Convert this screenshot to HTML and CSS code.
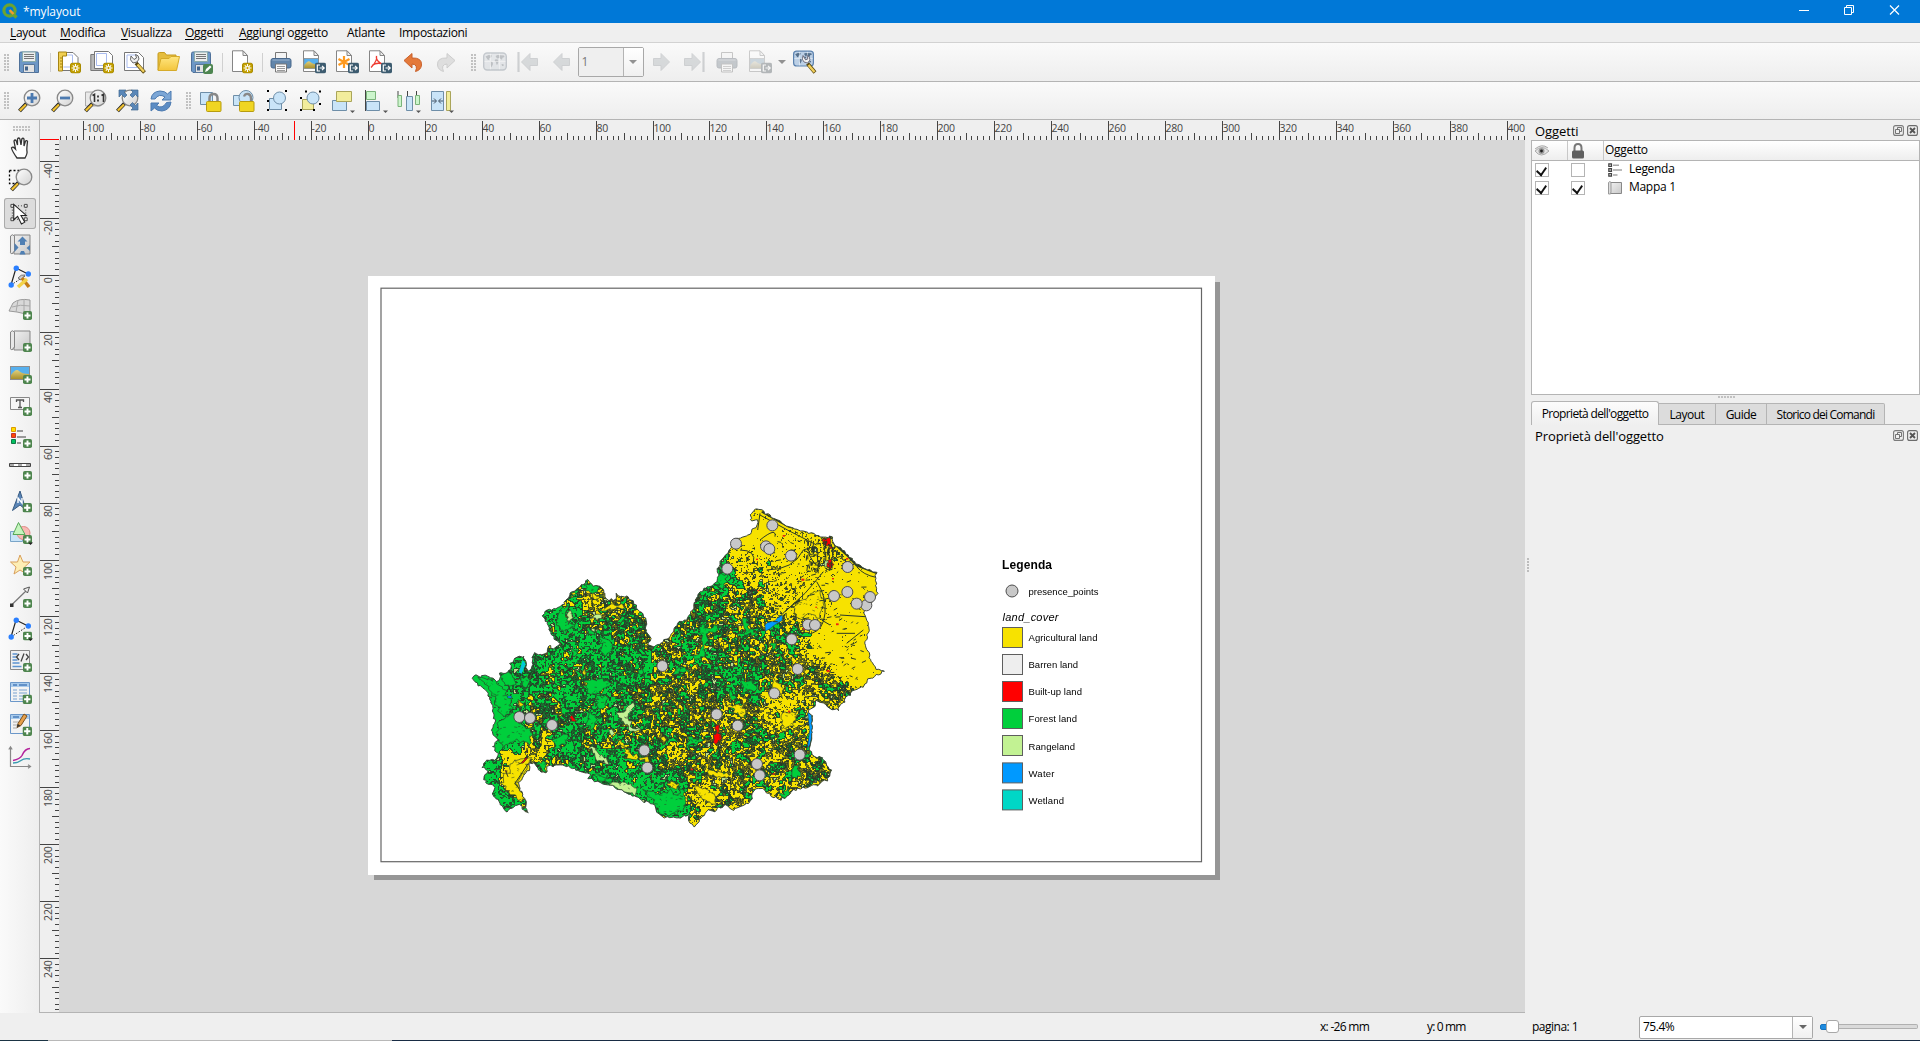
FILE: index.html
```html
<!DOCTYPE html>
<html lang="it">
<head>
<meta charset="utf-8">
<title>*mylayout</title>
<link rel="stylesheet" href="styles.css">
</head>
<body>
<svg class="sprite" aria-hidden="true">
  <defs>
    <linearGradient id="grey" x1="0" y1="0" x2="1" y2="1"><stop offset="0" stop-color="#f0f0f0"/><stop offset="1" stop-color="#c8c8c8"/></linearGradient>
    <linearGradient id="hill" x1="0" y1="0" x2="0" y2="1"><stop offset="0" stop-color="#e0cf7c"/><stop offset="1" stop-color="#a9902c"/></linearGradient>
    <linearGradient id="folder" x1="0" y1="0" x2="0" y2="1"><stop offset="0" stop-color="#ffe680"/><stop offset="1" stop-color="#f3c53c"/></linearGradient>
    <linearGradient id="glass" x1="0" y1="0" x2="1" y2="1"><stop offset="0" stop-color="#fff"/><stop offset="1" stop-color="#d2d2d2"/></linearGradient>
  </defs>
  <symbol id="b-new" viewBox="0 0 11 11"><rect x=".5" y=".5" width="10" height="10" rx="2" fill="#c4a000" stroke="#a88a00"/><path d="M5.5 1.5v8M1.5 5.5h8M2.8 2.8l5.4 5.4M8.2 2.8L2.8 8.2" stroke="#fff" stroke-width="1.1"/><circle cx="5.5" cy="5.5" r="1.6" fill="#c4a000" stroke="#fff" stroke-width=".9"/></symbol>
  <symbol id="b-add" viewBox="0 0 9 9"><rect width="9" height="9" rx="1.8" fill="#4e854e"/><path d="M4.5 1.5v6M1.5 4.5h6" stroke="#fff" stroke-width="1.9"/></symbol>
  <symbol id="b-exp" viewBox="0 0 11 11"><rect width="11" height="11" rx="2" fill="#3d5c70"/><path d="M5 2.5H2.3v6H5M4.5 5.5H9M7 3.3l2.2 2.2L7 7.700" fill="none" stroke="#fff" stroke-width="1.2"/></symbol>
  <symbol id="page" viewBox="0 0 24 24"><path d="M4.500.8h10.500l4.500 4.700v16h-15z" fill="#fff" stroke="#858585"/><path d="M15 .8v4.700h4.500z" fill="#ededed" stroke="#858585"/></symbol>
  <symbol id="disk" viewBox="0 0 24 24"><path d="M2.500 3.500q0-1.500 1.500-1.500h16q1.500 0 1.500 1.500v19h-17.500l-1.500-1.500z" fill="#6d97c6" stroke="#4f719a"/><rect x="5.500" y="2" width="13" height="9.500" fill="#eee" stroke="#8aa"/><path d="M7 4.500h10M7 6.500h10M7 8.500h10" stroke="#777"/><path d="M6.500 14.500h11v8h-11z" fill="#e3e3e3" stroke="#58779b"/><path d="M8 16.500h3v4H8z" fill="#44658d"/></symbol>
  <symbol id="lens" viewBox="0 0 24 24"><path d="M10 14L2.500 22" stroke="#222" stroke-width="4"/><path d="M9 15.500L2.800 21.600" stroke="#f1c232" stroke-width="2.200"/><circle cx="15" cy="9" r="7.800" fill="url(#glass)" stroke="#888" stroke-width="1.300"/></symbol>
  <symbol id="printer" viewBox="0 0 24 24"><path d="M6.500 2.500h11v7h-11z" fill="#f4f4f4" stroke="#777"/><rect x="2" y="8.500" width="20" height="9.500" rx="2" fill="#6286ab" stroke="#48688c"/><path d="M3.500 10h17" stroke="#9ab3cf"/><path d="M6.500 14h11v8h-11z" fill="#fafafa" stroke="#777"/><path d="M8 16.500h8M8 18.500h8M8 20.500h8" stroke="#999"/></symbol>
  <symbol id="pic" viewBox="0 0 20 14"><rect x=".5" y=".5" width="19" height="13" fill="#57b0ee" stroke="#8d8d8d"/><path d="M1 9q5-7 8-4t10 3v5H1z" fill="url(#hill)"/></symbol>
  <symbol id="nodes" viewBox="0 0 24 24"><path d="M3 20L8 3l12 6" stroke="#222" stroke-width="1.200" fill="none"/><path d="M3 20L20 9" stroke="#222" stroke-dasharray="1.500 1.500"/><g fill="#2a7fff"><circle cx="3.200" cy="20" r="2.700"/><circle cx="8.300" cy="3.200" r="2.700"/><circle cx="20.300" cy="9" r="2.700"/></g></symbol>
  <symbol id="atlas" viewBox="0 0 24 24"><rect x=".7" y="3" width="22.600" height="17" rx="3.500" fill="#bcd0e6" stroke="#5d83af" stroke-width="1.400"/><path d="M2.500 6.500l3-1.500 3.500.5-1 2-2 1 .5 1-1.500.5zM7.500 11l2 1 .5 2-1.500 3.500-1-3zM12.500 6l2-1 6.500.5.5 1.500-2 .8-.5 2-1.200-.8-1.300-1-2.500.5zM12 9.500l2.500-.3 1 2.300-1 3-1 .2-.5-2.500-1.300-1zM18.500 14l2 .2.300 1.500-1.800.3z" fill="#56708c"/><path d="M1.500 11.500h21M7.500 3.800v15.500M16.500 3.800v15.500" stroke="#fff" stroke-width=".8" opacity=".7"/></symbol>
  <symbol id="arrowl" viewBox="0 0 24 24"><path d="M3.500 12L12 3.500v5h7.500v7H12v5z" fill="#9db0bf" stroke="#8798a7"/></symbol>
  <symbol id="scroll" viewBox="0 0 24 24"><path d="M6 2h16v19H6z" fill="url(#grey)" stroke="#858585"/><path d="M2.500 3q1.700-2.500 4 0v15.500H6q-1 0-1 1.800-2.500 1-2.500-.5z" fill="#e8e8e8" stroke="#858585"/></symbol>
  <symbol id="float" viewBox="0 0 11 11"><rect x=".6" y=".6" width="9.800" height="9.800" rx="2" fill="none" stroke="#7b7b7b" stroke-width="1.100"/><path d="M4.500 4.500v-2h4v4h-2M2.500 4.500h4v4h-4z" fill="none" stroke="#666" stroke-width=".9"/></symbol>
  <symbol id="close" viewBox="0 0 11 11"><rect x=".6" y=".6" width="9.800" height="9.800" rx="2" fill="none" stroke="#6b6b6b" stroke-width="1.100"/><path d="M3 3l5 5M8 3L3 8" stroke="#555" stroke-width="1.900"/></symbol>
</svg>

<header class="titlebar">
  <svg class="logo" viewBox="0 0 16 16"><circle cx="7.500" cy="7.500" r="5.600" fill="none" stroke="#6aa332" stroke-width="3.200"/><path d="M8 8l6.500 6.500" stroke="#6aa332" stroke-width="3.400"/><path d="M7.500 7l4 4" stroke="#f29a2e" stroke-width="2.400"/></svg>
  <span class="title">*mylayout</span>
  <svg class="winbtns" viewBox="0 0 102 12"><g fill="none" stroke="#fff"><path d="M0 6.500h10"/><path d="M45.500 3.500h7v7h-7zM47.500 3.500v-2h7v7h-2"/><path d="M91 1.500l9 9M100 1.500l-9 9" stroke-width="1.200"/></g></svg>
</header>

<nav class="menubar">
  <span class="m1"><u>L</u>ayout</span><span class="m2"><u>M</u>odifica</span><span class="m3"><u>V</u>isualizza</span><span class="m4"><u>O</u>ggetti</span><span class="m5"><u>A</u>ggiungi oggetto</span><span class="m6">Atlante</span><span>Impostazioni</span>
</nav>

<div class="toolbar first">
  <i class="grip lead"></i>
  <svg class="ico"><use href="#disk"/></svg>
  <i class="sep"></i>
  <svg class="ico" viewBox="0 0 24 24"><path d="M4 2.500h12l5 5v13H4z" fill="#fff" stroke="#777"/><path d="M6.500 5h9v12h-9" fill="none" stroke="#a9bbee"/><path d="M1.500 2h8v4h-4v15h-4z" fill="#f0cf52" stroke="#a58413"/><path d="M3 8h2M3 11h2M3 14h2M3 17h2" stroke="#a58413"/><use href="#b-new" x="13" y="12.500" width="11" height="11"/></svg>
  <svg class="ico" viewBox="0 0 24 24"><path d="M.8 4.500h17v16h-17z" fill="#b9b9b9" stroke="#777"/><path d="M4.500 1.500h14l4 4v13h-18z" fill="#fff" stroke="#777"/><path d="M6.500 3.500h10v12h-10z" fill="none" stroke="#a9bbee"/><use href="#b-new" x="13" y="12.500" width="11" height="11"/></svg>
  <svg class="ico" viewBox="0 0 24 24"><path d="M1.500 2.500h14l5 5v13h-19z" fill="#fff" stroke="#777"/><path d="M4 5h10v12.500H4z" fill="none" stroke="#a9bbee"/><path d="M13 13l8.500 9.500" stroke="#5c4a12" stroke-width="3.800"/><path d="M14.500 14.500l6.500 7.300" stroke="#f1cf5a" stroke-width="2.400"/><path d="M8 6q-2 4 2 7l4-1 2-3q0-4-3.500-4.500l1 3.500-2.500 1.500z" fill="#eee" stroke="#666"/></svg>
  <svg class="ico" viewBox="0 0 24 24"><path d="M2 20V4q0-1.500 1.500-1.500h5L10.500 5H20v4" fill="#e5bd3e" stroke="#c79c1e"/><path d="M2 20.500L5 8.500h8l2-2h8.500l-3 14z" fill="url(#folder)" stroke="#d6ab2a"/></svg>
  <svg class="ico" viewBox="0 0 24 24"><use href="#disk" width="24" height="24"/><rect x="14" y="14" width="10" height="10" rx="2" fill="#4d8550"/><path d="M16 22l1-3 4-3.500 1.500 1.500-4 4z" fill="#fff"/></svg>
  <i class="sep"></i>
  <svg class="ico" viewBox="0 0 24 24"><use href="#page" width="24" height="24" x="-1"/><use href="#b-new" x="13" y="12.500" width="11" height="11"/></svg>
  <i class="sep"></i>
  <svg class="ico"><use href="#printer"/></svg>
  <svg class="ico" viewBox="0 0 24 24"><use href="#page" width="24" height="24" x="-3"/><use href="#pic" x="1.500" y="8" width="15.500" height="11"/><use href="#b-exp" x="13" y="12.500" width="11" height="11"/></svg>
  <svg class="ico" viewBox="0 0 24 24"><use href="#page" width="24" height="24" x="-3"/><path d="M9 6v12M3.500 9l11 6M14.500 9l-11 6" stroke="#ff9a1f" stroke-width="2.200"/><use href="#b-exp" x="13" y="12.500" width="11" height="11"/></svg>
  <svg class="ico" viewBox="0 0 24 24"><use href="#page" width="24" height="24" x="-3"/><path d="M8.500 6q1 5-5.500 11.500M8.500 6q-1.500 5 7 8.500M4 15.500q4-3 9-2" fill="none" stroke="#ee3a30" stroke-width="1.300"/><use href="#b-exp" x="13" y="12.500" width="11" height="11"/></svg>
  <svg class="ico" viewBox="0 0 24 24"><path d="M3 10.500L11 3.500v4.500q10-.5 9.500 7-.5 5-6 6.500 3-7-3.500-7.500v4z" fill="#e4793a" stroke="#c9602a"/></svg>
  <svg class="ico" viewBox="0 0 24 24"><path d="M21 10.500L13 3.500v4.500q-10-.5-9.500 7 .5 5 6 6.500-3-7 3.500-7.500v4z" fill="#dedede" stroke="#cdcdcd"/></svg>
  <i class="grip"></i>
  <svg class="ico dim" viewBox="0 0 24 24"><use href="#atlas" width="24" height="24"/></svg>
  <svg class="ico dim" viewBox="0 0 24 24"><path d="M2.500 2v20" stroke="#8798a7" stroke-width="2.200"/><use href="#arrowl" x="2" width="24" height="24"/></svg>
  <svg class="ico dim" viewBox="0 0 24 24"><use href="#arrowl" x="1" width="24" height="24"/></svg>
  <div class="combo page-combo"><span class="val">1</span><span class="drop"><i class="tri"></i></span></div>
  <svg class="ico dim flip" viewBox="0 0 24 24"><use href="#arrowl" width="24" height="24"/></svg>
  <svg class="ico dim flip" viewBox="0 0 24 24"><path d="M2.500 2v20" stroke="#8798a7" stroke-width="2.200"/><use href="#arrowl" x="2" width="24" height="24"/></svg>
  <svg class="ico dim"><use href="#printer"/></svg>
  <svg class="ico dim" viewBox="0 0 24 24"><use href="#page" width="24" height="24" x="-3"/><use href="#pic" x="1.500" y="8" width="15.500" height="11"/><use href="#b-exp" x="13" y="12.500" width="11" height="11"/></svg>
  <i class="tri gap"></i>
  <svg class="ico" viewBox="0 0 24 24"><use href="#atlas" x="0" y="-1.500" width="21" height="21"/><path d="M14.500 13.500l7.500 9" stroke="#5c4a12" stroke-width="3.700"/><path d="M15.500 15l6 7" stroke="#f1cf5a" stroke-width="2.400"/><path d="M10 5.500q-2 4 1 6.500l3.500 1 2.500-3q0-3.500-3-4.500l.8 3.500-2.300.8z" fill="#f2f2f2" stroke="#667" stroke-width=".9"/></svg>
</div>

<div class="toolbar second">
  <i class="grip lead"></i>
  <svg class="ico" viewBox="0 0 24 24"><use href="#lens" width="24" height="24"/><path d="M15 4v10M10 9h10" stroke="#4c7ab0" stroke-width="2.800"/></svg>
  <svg class="ico" viewBox="0 0 24 24"><use href="#lens" width="24" height="24"/><path d="M10 9h10" stroke="#4c7ab0" stroke-width="2.800"/></svg>
  <svg class="ico" viewBox="0 0 24 24"><path d="M2.500 3h15v14h-15z" fill="#e9e9e9" stroke="#aaa"/><use href="#lens" width="24" height="24"/><path d="M9.500 6.500l2-1.200V13M18.500 6.500l2-1.200V13" fill="none" stroke="#333" stroke-width="1.600"/><path d="M15 6.500v2M15 10.500v2" stroke="#333" stroke-width="1.800"/></svg>
  <svg class="ico" viewBox="0 0 24 24"><use href="#lens" x="-1" width="24" height="24"/><g fill="#5a87b8" stroke="#3f678f" stroke-width=".7"><path d="M3 1h7L8 3l3 3-2.500 2.500-3-3L3 8zM22 1h-7l2 2-3 3 2.500 2.500 3-3L22 8zM22 21h-7l2-2-3-3 2.500-2.500 3 3L22 14z"/></g></svg>
  <svg class="ico" viewBox="0 0 24 24"><path d="M2 10Q3 2.500 11 2q5 0 7.500 3L22 2v9h-9l3-3q-6-4-10 2z" fill="#7ba6d6" stroke="#4c7ab0"/><path d="M22 13q-1 8-9 9-5 0-7.500-3L2 22v-8h8l-2.500 2.500q6 4 10-3z" fill="#5b8cc4" stroke="#4c7ab0"/></svg>
  <i class="grip wide"></i>
  <svg class="ico" viewBox="0 0 24 24"><path d="M1.500 3.500h12v12h-12z" fill="#c9e4f8" stroke="#6e8ea8"/><path d="M10.500 13V9.500q0-4.500 4-4.500t4 4.500V13" fill="none" stroke="#888" stroke-width="2.500"/><rect x="7.500" y="12.500" width="14.500" height="10" rx="1" fill="#f0d523" stroke="#b79c0f"/></svg>
  <svg class="ico" viewBox="0 0 24 24"><path d="M1.500 6.500h9v10h-9z" fill="#c9e4f8" stroke="#6e8ea8"/><circle cx="14" cy="8.500" r="7" fill="#c9e4f8" stroke="#6e8ea8"/><path d="M12 7.500q1-3 4-2.500 3 .5 3 4.500V13" fill="none" stroke="#888" stroke-width="2.300"/><rect x="7.500" y="12.500" width="14.500" height="10" rx="1" fill="#f0d523" stroke="#b79c0f"/></svg>
  <svg class="ico" viewBox="0 0 24 24"><path d="M4.500 9.500h12v11h-12z" fill="#c9e4f8" stroke="#6e8ea8"/><circle cx="14.500" cy="9" r="6" fill="#c9e4f8" stroke="#6e8ea8"/><path d="M2 2h2m16 0h2M2 21h2m16 0h2M2 12h2" stroke="#000" stroke-width="2"/></svg>
  <svg class="ico" viewBox="0 0 24 24"><path d="M4.500 10.500h11v10h-11z" fill="#f2ed9c" stroke="#aaa55a"/><circle cx="15" cy="9" r="6" fill="#c9e4f8" stroke="#6e8ea8"/><path d="M7 2.500h2m12 0h2M2 9h2M2 21h2m11 0h2M21 15h2" stroke="#000" stroke-width="2"/></svg>
  <svg class="ico" viewBox="0 0 24 24"><path d="M1.500 11.500h14v10h-14z" fill="#c9e4f8" stroke="#6e8ea8"/><path d="M5.500 2.500h15v10h-15z" fill="#f2ed9c" stroke="#aaa55a"/><path d="M19 21.500h5l-2.500 2.500z" fill="#555"/></svg>
  <svg class="ico" viewBox="0 0 24 24"><path d="M1.500 1v21" stroke="#444"/><path d="M2.500 2.500h9v8h-9z" fill="#ccf5cc" stroke="#7bb37b"/><path d="M2.500 12.500h13v9h-13z" fill="#c9e4f8" stroke="#6e8ea8"/><path d="M19 21.500h5l-2.500 2.500z" fill="#555"/></svg>
  <svg class="ico" viewBox="0 0 24 24"><path d="M1 2v7M10.500 2v7M19.500 2v7" stroke="#444"/><path d="M1 6.500h3.500v11H1zM18.500 6.500h4v9h-4z" fill="#ccf5cc" stroke="#7bb37b"/><path d="M9.500 7.500h6v14h-6z" fill="#c9e4f8" stroke="#6e8ea8"/><path d="M19 21.500h5l-2.500 2.500z" fill="#555"/></svg>
  <svg class="ico" viewBox="0 0 24 24"><path d="M1.500 2.500h12v19h-12z" fill="#c9e4f8" stroke="#6e8ea8"/><path d="M16.500 2.500h4v19h-4z" fill="#f2ed9c" stroke="#aaa55a"/><path d="M2 12h4M4 9.500L6.500 12 4 14.500M13 12H9M11 9.500L8.500 12l2.500 2.500" fill="none" stroke="#456"/><path d="M19 21.500h5l-2.500 2.500z" fill="#555"/></svg>
</div>

<main class="workspace">
  <aside class="tools">
    <i class="grip flat"></i>
    <svg class="tool" viewBox="0 0 24 24"><path d="M9 22Q4 15 3.500 12q1.500-2 4 1L6 5q1-2 2.300 0L9.500 9V3q1.200-2 2.400 0L13 9l.8-6q1.200-1.500 2.200 0v7l1.500-5q1.500-1 2 .5-1 8-.5 10T17 22z" fill="#fff" stroke="#333" stroke-width="1.300"/></svg>
    <svg class="tool" viewBox="0 0 24 24"><path d="M1.500 2.500h10M1.500 2.500v13h8" fill="none" stroke="#000" stroke-width="1.300" stroke-dasharray="2 2"/><use href="#lens" width="24" height="24" x="1"/></svg>
    <svg class="tool active" viewBox="0 0 24 24"><path d="M4 4h14v14H4z" fill="none" stroke="#333" stroke-dasharray="1 2"/><g fill="#eee" stroke="#444"><path d="M2.500 2.500h3v3h-3zM16.500 2.500h3v3h-3zM2.500 16.500h3v3h-3zM16.500 16.500h3v3h-3z"/></g><path d="M5.500 2.500v16l4-3.500 4 8 3.500-2-4-7h5.500z" fill="#fff" stroke="#222" stroke-width="1.100"/></svg>
    <svg class="tool" viewBox="0 0 24 24"><use href="#scroll" width="24" height="24"/><g fill="#4f7fb3"><path d="M14.500 3.500l5 5H17V12h-5V8.500H9.500zM6.500 10v9l4-4.500zM22 12v6l-3.500-3zM11.500 21.500h6L16 18h-3z"/></g></svg>
    <svg class="tool" viewBox="0 0 24 24"><use href="#nodes" width="24" height="24"/><path d="M10 13q3-4 7-3l-4 5z" fill="#ccc" stroke="#777"/><path d="M14 13l7 9" stroke="#c27c16" stroke-width="3.500"/><path d="M19 14l-9 8" stroke="#f3d34a" stroke-width="3.500"/></svg>
    <svg class="tool" viewBox="0 0 24 24"><path d="M1 14L5 6q6-5 17-3v15L9 15z" fill="#d9d9d9" stroke="#999"/><path d="M4 10q8-3 18-1M10 3L8 15M16 2v14" fill="none" stroke="#aaa"/><use href="#b-add" x="15" y="14" width="9" height="9"/></svg>
    <svg class="tool" viewBox="0 0 24 24"><use href="#scroll" width="24" height="24"/><use href="#b-add" x="15" y="14" width="9" height="9"/></svg>
    <svg class="tool" viewBox="0 0 24 24"><use href="#pic" x="2" y="5" width="20" height="14"/><use href="#b-add" x="15" y="14" width="9" height="9"/></svg>
    <svg class="tool" viewBox="0 0 24 24"><path d="M2.500 4.500h19v12h-19z" fill="#f6f6f6" stroke="#888"/><path d="M8.500 9V7h7v2M12 7v7.500M10 14.500h4" fill="none" stroke="#555" stroke-width="1.300"/><use href="#b-add" x="15" y="14" width="9" height="9"/></svg>
    <svg class="tool" viewBox="0 0 24 24"><path d="M3.500 2.500h4v4h-4z" fill="#ffe000" stroke="#dc9a00"/><path d="M3.500 8.500h4v4h-4z" fill="#ff4a00" stroke="#b33"/><path d="M3.500 14.500h4v4h-4z" fill="#00c060" stroke="#174"/><path d="M9 6h6M9 12h9M9 18h4" stroke="#999" stroke-width="1.800"/><use href="#b-add" x="15" y="14" width="9" height="9"/></svg>
    <svg class="tool" viewBox="0 0 24 24"><path d="M1.500 6.500h21v3h-21z" fill="#aaa" stroke="#444"/><path d="M6 8h4M14 8h4" stroke="#fff" stroke-width="2"/><use href="#b-add" x="15" y="14" width="9" height="9"/></svg>
    <svg class="tool" viewBox="0 0 24 24"><path d="M12 2L4.500 21.500 12 16l6 5z" fill="#5b86b8" stroke="#375a80"/><path d="M10 14V9l4 5V9" fill="none" stroke="#fff" stroke-width="1.400"/><use href="#b-add" x="14.500" y="14" width="9.500" height="9.500"/></svg>
    <svg class="tool" viewBox="0 0 24 24"><path d="M2.500 10.500h12v10h-12z" fill="#c9e4f8" stroke="#7aa5c8"/><circle cx="15.500" cy="12" r="6.500" fill="#f9b9b4" stroke="#e08a85"/><path d="M10.500 1.500l6.500 12H5z" fill="#c5f5bd" stroke="#58a858"/><use href="#b-add" x="15" y="14" width="9" height="9"/><path d="M20 21.500h5l-2.500 2.500z" fill="#222"/></svg>
    <svg class="tool" viewBox="0 0 24 24"><path d="M12 2l3 7h7l-5.500 5 2 7-6.500-4-6 4 2-7-5.500-5h7z" fill="#fdeeb5" stroke="#d9a05c"/><use href="#b-add" x="15" y="14" width="9" height="9"/></svg>
    <svg class="tool" viewBox="0 0 24 24"><path d="M3.500 20L19 5" stroke="#777" stroke-width="1.200"/><path d="M2 18.500h3.500V22H2z" fill="#333"/><path d="M21.500 2l-2 6-4-4z" fill="#eee" stroke="#555"/><use href="#b-add" x="15" y="14" width="9" height="9"/></svg>
    <svg class="tool" viewBox="0 0 24 24"><use href="#nodes" width="24" height="24"/><use href="#b-add" x="15" y="14.500" width="9" height="9"/><path d="M20 21.500h5l-2.500 2.500z" fill="#222"/></svg>
    <svg class="tool" viewBox="0 0 24 24"><path d="M2.500 1.500h19v19h-19z" fill="#f0f0f0" stroke="#888"/><path d="M4.500 5h5M4.500 8h4M4.500 11h5M4.500 14h7M4.500 17.500h9" stroke="#5c93cf" stroke-width="1.600"/><path d="M11 5L8.500 8 11 11M16 4.500l-3 8M18 5l2.500 3L18 11" fill="none" stroke="#444" stroke-width="1.300"/><use href="#b-add" x="15" y="14" width="9" height="9"/></svg>
    <svg class="tool" viewBox="0 0 24 24"><path d="M2.500 1.500h19v19h-19z" fill="#f3f3f3" stroke="#6b97c9"/><path d="M3 2h18v4H3z" fill="#a9cbec"/><path d="M5 4h4M11 4h8" stroke="#4a7ebb" stroke-width="1.500"/><path d="M5 9h4M11 9h8M5 12h4M11 12h8M5 15h4M11 15h6M5 18h4M11 18h4" stroke="#7aa3d2" stroke-width="1.200"/><use href="#b-add" x="14.500" y="13.500" width="9.500" height="9.500"/></svg>
    <svg class="tool" viewBox="0 0 24 24"><path d="M2.500 1.500h19v19h-19z" fill="#f3f3f3" stroke="#6b97c9"/><path d="M3 2h18v4H3z" fill="#a9cbec"/><path d="M5 4h6" stroke="#4a7ebb" stroke-width="1.500"/><path d="M5 9h6M5 12h4M5 15h4" stroke="#aaa"/><path d="M9 14.500l1-4 6-9.500 3 2-6 9.500z" fill="#e6a04c" stroke="#7b5220"/><path d="M9 14.500l.8-3.500 2.500 1.500z" fill="#333"/><use href="#b-add" x="14.500" y="13.500" width="9.500" height="9.500"/></svg>
    <svg class="tool" viewBox="0 0 24 24"><path d="M2.500 3v18.500H22M.8 4.500l1.700-2.700 1.700 2.700M20 19.800l2.500 1.700-2.500 1.700" fill="none" stroke="#888" stroke-width="1.200"/><path d="M5 15.500q7-1.500 9-5 3-7 8-7" fill="none" stroke="#b3219b" stroke-width="1.500"/><path d="M5 18q5 0 8-2.500t9-1.500" fill="none" stroke="#3a9bb0" stroke-width="1.300"/></svg>
  </aside>

  <section class="canvas">
    <svg class="hruler" id="hruler" width="1485" height="20"></svg>
    <svg class="vruler" id="vruler" width="19" height="872"></svg>
    <div class="scene">
      <div class="paper">
        <canvas id="land" class="land" width="440" height="340"></canvas>
        <svg class="sheet" viewBox="368 276 847 599">
          <rect x="381" y="288.200" width="820.500" height="573.500" fill="none" stroke="#666" stroke-width="1.200"/>
          <g class="points" id="points"></g>
          <text x="1002" y="569" class="lt" textLength="50">Legenda</text>
          <circle cx="1012" cy="591" r="6" class="pt"/>
          <text x="1028.500" y="594.500" class="li" textLength="70">presence_points</text>
          <text x="1002.500" y="621" class="lg" textLength="56">land_cover</text>
          <g class="swatch">
            <rect x="1002.500" y="627.500" width="20" height="20" fill="#f7e200"/>
            <rect x="1002.500" y="654.500" width="20" height="20" fill="#eee"/>
            <rect x="1002.500" y="681.500" width="20" height="20" fill="#f00"/>
            <rect x="1002.500" y="708.500" width="20" height="20" fill="#00cf3c"/>
            <rect x="1002.500" y="735.500" width="20" height="20" fill="#c2f293"/>
            <rect x="1002.500" y="762.900" width="20" height="20" fill="#0099ff"/>
            <rect x="1002.500" y="789.900" width="20" height="20" fill="#00d7c6"/>
          </g>
          <g class="li">
            <text x="1028.500" y="641" textLength="69">Agricultural land</text>
            <text x="1028.500" y="668" textLength="49.500">Barren land</text>
            <text x="1028.500" y="695" textLength="53.500">Built-up land</text>
            <text x="1028.500" y="722" textLength="48.500">Forest land</text>
            <text x="1028.500" y="750" textLength="46.500">Rangeland</text>
            <text x="1028.500" y="777" textLength="26">Water</text>
            <text x="1028.500" y="804" textLength="35.500">Wetland</text>
          </g>
        </svg>
      </div>
    </div>
  </section>

  <i class="vsplit"></i>

  <aside class="docks">
    <div class="dock-title"><span>Oggetti</span><svg><use href="#float"/></svg><svg><use href="#close"/></svg></div>
    <div class="tree">
      <div class="thead">
        <span><svg width="16" height="12" viewBox="0 0 16 12"><path d="M1 4Q8-2 14 3M1 6q6 8 14 0-7-7-14 0z" fill="#e4e4e4" stroke="#aaa"/><circle cx="7.500" cy="6" r="3" fill="#999"/><circle cx="7.500" cy="6" r="1.400" fill="#222"/></svg></span>
        <span><svg width="12" height="16" viewBox="0 0 12 16"><path d="M2.500 8V5q0-4 3.500-4t3.500 4v3" fill="none" stroke="#777" stroke-width="2"/><rect y="7.500" width="12" height="8" rx="1.500" fill="#606060"/></svg></span>
        <span>Oggetto</span>
      </div>
      <div class="trow"><i class="chk on"></i><i class="chk"></i><svg width="14" height="14" viewBox="0 0 14 14"><path d="M.8.800h2.700v2.700H.800zM.8 5.600h2.700v2.700H.800zM.8 10.500h2.700v2.700H.800z" fill="#ccc" stroke="#444" stroke-width="1.200"/><path d="M5 2.200h6M5 7h9M5 12h4.500" stroke="#a5a5a5" stroke-width="1.600"/></svg><span>Legenda</span></div>
      <div class="trow"><i class="chk on"></i><i class="chk on"></i><svg width="14" height="14" viewBox="0 0 14 14"><path d="M2.500 1.500h11v11h-11z" fill="url(#grey)" stroke="#888"/><path d="M.5 1.500q1.500-2 2.500 0v9.500l-.5 2h-2z" fill="#ddd" stroke="#999"/></svg><span>Mappa 1</span></div>
    </div>
    <i class="hsplit"></i>
    <div class="tabs"><span class="tab sel">Proprietà dell'oggetto</span><span class="tab t2">Layout</span><span class="tab t3">Guide</span><span class="tab t4">Storico dei Comandi</span><i></i></div>
    <div class="dock-title"><span>Proprietà dell'oggetto</span><svg><use href="#float"/></svg><svg><use href="#close"/></svg></div>
  </aside>
</main>

<footer class="status">
  <span class="sx">x: -26 mm</span><span class="sy">y: 0 mm</span><span class="sp">pagina: 1</span>
  <div class="combo zoom"><span class="val">75.4%</span><span class="drop"><i class="tri"></i></span></div>
  <div class="slider"><i class="fill"></i><i class="knob"></i><i class="track"></i></div>
</footer>
<div class="edge"><i></i><i></i><i></i></div>
<script src="app.js"></script>
</body>
</html>
```
FILE: styles.css
```css
* { box-sizing: border-box; }
body { margin: 0; width: 1920px; height: 1041px; overflow: hidden; display: flex; flex-direction: column; background: #efefef; color: #000; font: 12px/16px "Open Sans", "Noto Sans", sans-serif; letter-spacing: -.3px; }
i { display: block; font-style: normal; }
.sprite { position: absolute; width: 0; height: 0; }
svg { flex: none; }

.titlebar { height: 23px; flex: none; background: #0078d7; color: #fff; display: flex; align-items: center; padding: 0 15px 0 2px; }
.logo { width: 16px; height: 16px; margin-bottom: 1px; }
.title { margin-left: 5px; flex: 1; letter-spacing: -.1px; }
.winbtns { width: 102px; height: 12px; margin: 0 4px 3px 0; }

.menubar { height: 20px; flex: none; display: flex; padding: 2px 0 0 10px; border-bottom: 1px solid #d2d2d2; white-space: nowrap; }
.menubar u { text-underline-offset: 2px; text-decoration-thickness: 1px; }
.m1 { width: 50px; } .m2 { width: 61px; } .m3 { width: 64px; } .m4 { width: 54px; } .m5 { width: 108px; } .m6 { width: 52px; }

.toolbar { flex: none; display: flex; align-items: center; background: linear-gradient(#fafafa, #eeeeee); border-bottom: 1px solid #b4b4b4; }
.toolbar.first { height: 39px; }
.toolbar.second { height: 38px; }
.ico { width: 24px; height: 24px; margin: 0 4.500px; overflow: visible; }
.dim { opacity: .38; filter: grayscale(.7); }
.flip { transform: scaleX(-1); }
.sep { width: 1px; height: 19px; background: #d0d0d0; margin: 0 2px 0 4px; }
.grip { width: 5px; height: 17px; margin: 0 3px 0 8px; background: radial-gradient(circle at 1px 1px, #c0c0c0 .7px, transparent 1px) 0 0 / 3px 3px; }
.grip.lead { margin: 0 3.500px 0 4px; }
.grip.wide { margin: 0 3.500px 0 8px; }
.grip.flat { width: 17px; height: 5px; margin: 0 0 1px 9px; }
.tri { width: 0; height: 0; border: 4px solid transparent; border-top: 4px solid #666; border-bottom: 0; }
.tri.gap { margin: 0 2px; opacity: .7; }
.combo { display: flex; border: 1px solid #a8a8a8; border-radius: 2px; background: #fff; }
.combo .val { flex: 1; display: flex; align-items: center; padding-left: 3px; }
.combo .drop { width: 20px; border-left: 1px solid #b4b4b4; background: linear-gradient(#fff, #f0f0f0); display: flex; align-items: center; justify-content: center; }
.page-combo { width: 66px; height: 30px; margin: 0 .5px 0 0; }
.page-combo .val { background: #efefef; color: #787878; }
.page-combo .tri { opacity: .7; }

.workspace { flex: none; height: 893px; display: flex; }
.tools { width: 40px; flex: none; border-right: 1px solid #b4b4b4; background: linear-gradient(90deg, #fafafa, #eeeeee); padding: 6px 0 0 4px; display: flex; flex-direction: column; }
.tool { width: 32px; height: 32px; padding: 4px; overflow: visible; flex: none; }
.tool.active { height: 31px; margin: 2px 0 0; background: #dcdcdc; border-radius: 3px; box-shadow: inset 0 0 0 1px #ababab; }

.canvas { width: 1485px; flex: none; display: grid; grid-template: 20px 872px / 19px 1466px; border-bottom: 1px solid #b4b4b4; }
.hruler { grid-area: 1 / 1 / 2 / 3; }
.vruler { grid-area: 2 / 1; }
.canvas text { font-family: "Open Sans", sans-serif; }
.hruler text, .vruler text { font-size: 10.500px; fill: #444; letter-spacing: -.2px; }
.scene { background: #d7d7d7; padding: 136px 0 0 309px; overflow: hidden; }
.paper { position: relative; width: 847px; height: 599px; background: #fff; box-shadow: 5px 5px 0 #969696; clip-path: polygon(0 0, 847px 0, 847px 6px, 852px 6px, 852px 604px, 6px 604px, 6px 599px, 0 599px); }
.land { position: absolute; left: 92px; top: 224px; }
.sheet { position: absolute; left: 0; top: 0; width: 847px; height: 599px; }
.pt, .points circle { fill: #c8c8c8; stroke: #4c4c4c; stroke-width: 1; }
.swatch rect { stroke: #5e5e5e; stroke-width: 1; }
.canvas .sheet text { font-family: "Liberation Sans", Arial, sans-serif; letter-spacing: 0; fill: #000; }
.lt { font-size: 12px; font-weight: bold; }
.li { font-size: 9.500px; }
.lg { font-size: 11px; font-style: italic; }

.vsplit { width: 6px; flex: none; background: radial-gradient(circle at 1px 1px, #bbb .7px, transparent 1px) 2px 0 / 9px 3px; clip-path: inset(438px 2px 440px 2px); }
.docks { flex: 1; display: flex; flex-direction: column; }
.dock-title { height: 20px; display: flex; align-items: center; padding: 2px 1px 0 4px; font-size: 13px; letter-spacing: -.1px; }
.dock-title span { flex: 1; }
.dock-title svg { width: 11px; height: 11px; margin: 0 1px 1px 2px; }
.tree { height: 255px; background: #fff; border: 1px solid #b4b4b4; }
.thead { height: 20px; display: flex; border-bottom: 1px solid #b4b4b4; background: linear-gradient(#fff, #eee); }
.thead span { border-right: 1px solid #c8c8c8; width: 36px; padding-left: 2px; display: flex; align-items: center; }
.thead span:nth-child(2) { padding-left: 4px; }
.thead span:last-child { flex: 1; border: 0; padding: 0 0 1px 1px; }
.trow { height: 18px; display: flex; align-items: center; padding-left: 3px; }
.trow span { padding: 0 0 2px 7px; }
.trow svg { margin-left: 1px; }
.chk { width: 14px; height: 14px; border: 1px solid #b4b4b4; background: #fff; margin-right: 22px; display: flex; justify-content: center; }
.chk.on::after { content: ""; width: 5px; height: 8px; margin: 1px 1px 0 0; border: solid #111; border-width: 0 2px 2px 0; transform: rotate(35deg) skewY(8deg); }
.hsplit { height: 6px; width: 17px; margin-left: 187px; background: radial-gradient(circle at 1px 1px, #c0c0c0 .7px, transparent 1px) 0 1px / 3px 9px repeat-x; }
.tabs { display: flex; height: 24px; align-items: flex-end; letter-spacing: -.5px; }
.tab { height: 22px; border: 1px solid #b4b4b4; border-left: 0; background: #dcdcdc; display: flex; align-items: center; justify-content: center; white-space: nowrap; padding-top: 1px; }
.tab.sel { width: 128px; height: 24px; border-left: 1px solid #b4b4b4; border-bottom: 0; border-radius: 3px 3px 0 0; background: linear-gradient(#fcfcfc, #efefef); letter-spacing: -.65px; }
.t2 { width: 57px; }
.t3 { width: 51px; }
.tab.t4 { width: 118px; border-radius: 0 2px 0 0; letter-spacing: -.78px; }
.tabs > i { flex: 1; height: 1px; background: #b4b4b4; }

.status { height: 27px; flex: none; display: flex; align-items: center; letter-spacing: -.5px; white-space: nowrap; }
.sx { width: 107px; margin-left: 1320px; letter-spacing: -.7px; }
.sy { width: 105px; letter-spacing: -.85px; }
.sp { width: 107px; }
.zoom { width: 174px; height: 23px; margin-top: 1px; }
.slider { display: flex; align-items: center; margin-left: 7px; width: 98px; }
.slider .fill { width: 7px; height: 6px; background: #1e8be0; border-radius: 2px 0 0 2px; border: 1px solid #1673bd; }
.slider .knob { width: 13px; height: 13px; background: #fff; border: 1px solid #a8a8a8; border-radius: 3px; margin-left: -1px; }
.slider .track { flex: 1; height: 5px; background: #dadada; border: 1px solid #b0b0b0; border-left: 0; border-radius: 0 2px 2px 0; }
.edge { height: 1px; display: flex; flex: none; }
.edge i:nth-child(1) { width: 48px; background: #1b3444; }
.edge i:nth-child(2) { width: 344px; background: #b8b8b8; }
.edge i:nth-child(3) { flex: 1; background: #182c44; }
```
FILE: app.js
```js
// Rulers: 2.848 px per millimetre, a tick every 2 mm.
const SCALE = 2.848;
let h = '', v = '';
for (let u = -150; u <= 420; u += 2) {
  const x = Math.floor(328.2 + u * SCALE) + 0.5;
  const major = u % 20 === 0, mid = u % 10 === 0;
  if (x > 19 && x < 1485) {
    h += `<path d="M${x} ${major ? 1 : mid ? 13 : 16}V20" stroke="#444"/>`;
    if (major) h += `<text x="${x}" y="11.500">${u}</text>`;
  }
  const y = Math.floor(136.2 + u * SCALE) - 0.5;
  if (y > 1 && y < 872) {
    v += `<path d="M${major ? 0 : mid ? 12 : 15} ${y}H19" stroke="#444"/>`;
    if (major) v += `<text transform="translate(11.500 ${y + 2}) rotate(-90)" text-anchor="end">${u}</text>`;
  }
}
h += '<path d="M254.500 1V20M0 19.500H19" stroke="red" stroke-width="1"/>';
document.getElementById('hruler').innerHTML = h;
document.getElementById('vruler').innerHTML = v;

// Region border, in thirds of a pixel.
const border = '36,535 45,527 60,530 75,525 95,533 108,545 118,540 120,520 145,517 155,508 150,492 165,478 178,470 192,470 197,495 200,508 210,515 218,500 215,470 222,460 240,465 260,455 262,440 270,434 278,450 300,432 285,415 270,402 265,370 248,352 252,333 275,328 300,322 320,300 330,280 355,265 384,238 402,258 425,260 430,275 445,300 465,298 470,282 480,292 500,290 520,305 530,325 550,340 558,370 560,395 570,415 565,435 590,440 610,425 635,405 645,380 665,362 680,360 700,325 710,290 735,262 765,250 775,225 770,205 785,180 810,150 815,125 835,115 870,100 893,75 892,60 872,60 875,40 890,25 905,32 935,52 985,80 1040,97 1090,110 1117,112 1118,128 1140,145 1165,168 1190,192 1215,208 1250,215 1247,250 1252,280 1235,310 1212,335 1228,375 1222,410 1212,430 1225,458 1230,485 1250,505 1272,512 1245,530 1220,540 1212,560 1180,575 1158,592 1152,610 1137,617 1135,630 1115,628 1090,612 1068,603 1060,622 1045,630 1055,650 1058,690 1050,730 1045,745 1062,768 1085,775 1115,810 1100,840 1075,855 1040,860 1000,870 980,890 960,898 930,885 905,865 880,870 875,900 850,918 820,930 800,915 770,925 765,938 745,930 725,955 705,978 690,972 685,945 655,955 610,952 590,935 580,910 555,905 530,890 490,875 450,855 420,850 385,835 390,822 360,815 330,800 290,795 262,800 258,820 235,808 220,785 210,790 205,810 190,830 175,850 180,870 195,900 205,942 190,930 175,910 140,935 125,918 105,890 95,885 105,860 80,850 70,830 85,815 65,800 75,785 105,778 115,760 100,740 115,720 95,690 105,665 100,640 95,610 85,585 75,565 50,552';

let seed = 7;
const rnd = () => ((seed = (seed * 1664525 + 1013904223) >>> 0) / 4294967296);

// Break each border segment into small jagged steps.
function jag(str, amp) {
  const p = str.split(' ').map(s => s.split(',').map(Number)), out = [];
  p.forEach((a, i) => {
    const b = p[(i + 1) % p.length], n = Math.max(1, Math.round(Math.hypot(b[0] - a[0], b[1] - a[1]) / 7));
    for (let k = 0; k < n; k++) out.push([a[0] + (b[0] - a[0]) * k / n + (rnd() - .5) * amp, a[1] + (b[1] - a[1]) * k / n + (rnd() - .5) * amp]);
  });
  return new Path2D('M' + out.map(q => q.join(' ')).join('L') + 'Z');
}

// Value noise remapped to a roughly uniform 0..1 range.
function field(cell) {
  const t = Array.from({ length: 65536 }, rnd);
  const at = (x, y) => t[((y & 255) << 8) | (x & 255)];
  return (x, y) => {
    x /= cell; y /= cell;
    const i = Math.floor(x), j = Math.floor(y);
    let a = x - i, b = y - j;
    a = a * a * (3 - 2 * a); b = b * b * (3 - 2 * b);
    const n = at(i, j) * (1 - a) * (1 - b) + at(i + 1, j) * a * (1 - b) + at(i, j + 1) * (1 - a) * b + at(i + 1, j + 1) * a * b;
    return 1 / (1 + Math.exp(-(n - .5) * 9));
  };
}
const big = field(7), mid = field(3), fine = field(1.8), clump = field(10), rare = field(3.2);

// x, y, share of forest, fragmentation
const ctl = [[900,110,.02,.12],[1000,200,.02,.22],[1150,250,0,.06],[1100,450,0,.08],[1180,500,0,.05],[1150,380,0,.08],[1000,290,.1,.5],[1060,300,.03,.2],[920,250,.15,.6],[860,200,.08,.4],[1090,160,.1,.5],[790,240,.65,.75],[750,340,.6,.92],[880,320,.4,.92],[650,450,.5,.95],[760,470,.55,.9],[900,450,.5,.95],[1050,510,.4,.92],[1000,560,.45,.92],[970,620,.1,.4],[1000,720,.4,.9],[1110,590,.25,.9],[980,400,.45,.85],[850,550,.65,.85],[700,600,.45,.96],[850,680,.45,.92],[850,790,.4,.92],[950,750,.4,.92],[1000,800,.45,.88],[1070,810,.4,.88],[730,890,.2,.5],[820,890,.4,.88],[640,900,.9,.5],[540,850,.9,.5],[600,740,.45,.92],[700,800,.45,.96],[590,620,.42,.96],[450,600,.8,.8],[350,500,.75,.92],[300,370,.85,.6],[450,330,.35,.88],[520,380,.7,1],[500,470,.75,.92],[350,590,.75,.95],[140,700,1,.22],[100,570,1,.05],[180,570,.95,.6],[250,640,.6,.95],[320,730,.9,.7],[380,680,.7,.85],[450,700,.7,.82],[450,790,.85,.8],[165,820,0,.1],[130,900,.9,.65],[90,810,.95,.6],[430,440,.95,.6],[240,500,.8,.95],[950,860,.25,.65],[240,750,.4,.7]];
const W = 440, H = 340;
const cv = document.getElementById('land'), c = cv.getContext('2d');
const cls = new Uint8Array(W * H), frag = new Float32Array(W * H);
for (let y = 0; y < H; y++) for (let x = 0; x < W; x++) {
  let sw = 0, g = 0, f = 0;
  for (const q of ctl) {
    const dx = q[0] / 3 - x, dy = q[1] / 3 - y, w = 1 / Math.pow(dx * dx + dy * dy + 20, 2);
    sw += w; g += w * q[2]; f += w * q[3];
  }
  g /= sw; f /= sw;
  const n = big(x, y) * (1 - f * .6) + mid(x, y) * f * .6;
  let k = n < g * 1.04 - .02 ? 1 : 0;
  if (rare(x, y) > .965 && f > .45) k = 2;
  if (rare(x + 90, y + 40) > .986 && f > .4) k = 3;
  cls[y * W + x] = k; frag[y * W + x] = f;
}

// Land-cover pixels, plus separate layers for the parcel edges.
function layer(paint) {
  const t = document.createElement('canvas');
  t.width = W; t.height = H;
  const g = t.getContext('2d'), img = g.createImageData(W, H);
  for (let y = 0; y < H; y++) for (let x = 0; x < W; x++) img.data.set(paint(x, y, y * W + x), (y * W + x) * 4);
  g.putImageData(img, 0, 0);
  return t;
}
const rgb = [[247, 226, 0], [0, 207, 60], [186, 220, 140], [170, 40, 20]];
const base = layer((x, y, i) => [...rgb[cls[i]], 255]);
const seams = layer((x, y, i) => [40, 56, 40, cls[i] !== cls[i + 1] || cls[i] !== cls[i + W] ? 205 : 0]);
const specks = layer((x, y, i) => {
  const f = frag[i], m = f * f * (.34 + 1.1 * clump(x, y));
  const on = fine(x, y) < m * .66 || (fine(x + 50, y) > .9 && rnd() < f * 1.2);
  return [40, 56, 40, on ? 140 + rnd() * 115 : 0];
});

c.scale(1 / 3, 1 / 3);
c.save();
const outline = jag(border, 7);
c.clip(outline);
c.drawImage(base, 0, 0, W * 3, H * 3);
c.drawImage(seams, 0, 0, W * 3, H * 3);
c.drawImage(specks, 0, 0, W * 3, H * 3);

const patch = (fill, list) => list.forEach(s => {
  const p = jag(s, 12);
  c.fillStyle = fill; c.fill(p);
  c.strokeStyle = '#2c3f2c'; c.lineWidth = 2; c.stroke(p);
  // Small parcels inside the patch.
  c.save(); c.clip(p); c.globalAlpha = .8;
  const q = s.split(' ').map(t => t.split(',').map(Number)), xs = q.map(t => t[0]), ys = q.map(t => t[1]);
  const x0 = Math.min(...xs), y0 = Math.min(...ys), w = Math.max(...xs) - x0, hh = Math.max(...ys) - y0;
  for (let k = 0; k < w * hh / 300; k++) {
    const x = x0 + rnd() * w, y = y0 + rnd() * hh;
    c.beginPath(); c.moveTo(x, y); c.lineTo(x + 2 + rnd() * 7, y + (rnd() - .5) * 7); c.stroke();
  }
  c.restore();
});
patch('#00cf3c', ['50,535 100,540 130,560 145,590 160,625 130,650 110,620 95,575', '115,665 160,640 190,680 215,690 210,735 170,720 130,745 110,710', '120,522 150,515 170,550 150,565 125,545', '375,545 420,535 460,548 425,570 410,590 385,575', '420,405 445,420 460,450 440,470 425,450', '375,250 420,262 400,285 378,272', '300,325 325,320 318,365 345,375 310,400 285,370', '550,870 600,885 630,870 650,890 670,860 680,910 650,945 600,945 580,905', '395,825 440,830 480,845 430,845', '275,715 325,705 320,730 290,745', '722,368 735,368 742,385 775,378 772,392 745,398 735,440 732,475 705,475 703,465 720,460 726,420', '850,350 862,352 865,385 888,395 882,404 855,402', '840,545 880,545 890,570 850,575', '805,570 818,572 830,595 815,605', '685,710 740,722 685,738', '960,880 990,868 985,890 965,898', '1000,800 1015,795 1025,830 1000,830', '225,790 262,785 255,815', '525,520 545,500 550,530', '660,500 690,515 640,520', '930,430 950,435 940,450', '330,440 355,465 335,470', '385,375 410,400 380,400', '390,640 410,640 400,690 380,680', '180,530 210,535 205,560 185,555', '410,590 440,590 430,630 415,625', '770,225 800,225 795,265 775,260']);
patch('#c2f293', ['465,640 495,635 500,612 520,605 520,635 500,650 520,680 545,690 515,700 500,670 485,665', '390,740 410,745 415,765 440,775 445,790 415,780', '450,852 490,850 530,860 528,888 480,872', '322,335 335,332 340,355 325,370', '385,352 425,345 415,355 390,360', '395,385 412,390 410,403', '1090,180 1110,182 1105,200 1092,196', '1030,650 1055,648 1050,662', '82,585 90,590 95,612', '450,690 465,695 455,705']);
patch('#f7e200', ['160,785 210,778 195,815 165,850 190,880 190,905 155,880 125,850 130,820 150,815', '700,862 740,865 770,890 765,915 725,895', '965,640 1010,635 1000,680 970,690', '410,335 440,318 490,312 490,325 440,328', '805,615 850,615 855,650 830,640', '1060,280 1080,270 1090,320 1080,355 1050,340 1020,360 1000,320', '740,810 800,822 810,830 750,826', '470,715 520,765 560,770 565,785 505,772', '930,530 965,555 970,590 945,565', '620,845 660,855 645,865', '600,712 620,712 612,735', '292,640 305,640 300,668', '175,600 188,608 178,625', '370,510 385,515 375,530', '395,285 430,285 430,295 400,295', '335,275 350,280 335,295']);
patch('#ff0000', ['1082,118 1112,110 1110,130 1118,150 1105,140 1088,135', '1108,180 1120,178 1112,205 1100,200', '768,672 782,670 778,700 788,715 772,735 758,718 770,704', '330,660 338,640 346,658', '178,790 205,775 195,788', '135,815 142,810 140,825', '470,375 484,370 482,378']);
c.fillStyle = '#e21';
[[1024, 236, 9], [888, 176, 6], [1116, 234, 6], [1128, 370, 8], [1100, 510, 9], [1028, 384, 7], [984, 632, 7], [968, 105, 7], [1158, 174, 7], [892, 270, 5], [955, 470, 6], [692, 806, 7], [938, 820, 6], [1066, 320, 5]].forEach(([x, y, s]) => c.fillRect(x, y, s, s * .7));
const water = new Path2D('M915 375L922 368 945 362 960 346 968 348 966 362 945 374 930 386 916 394ZM1043 638L1054 640 1059 690 1050 735 1042 745 1049 690ZM143 588h12v6h-12z');
c.fillStyle = '#0099ff'; c.fill(water); c.lineWidth = 1.5; c.stroke(water);
c.fillStyle = '#00c8d8'; c.fill(new Path2D('M188 480L197 492 185 521 177 517Z'));

// Rivers, roads and the coastal strip.
c.strokeStyle = '#2a3a28';
[[5, 'M905 35L985 80L1115 112'], [8, 'M1118 125L1165 168L1190 195L1250 218'], [3, 'M900 40L893 90M1020 300Q975 330 960 350M1090 215Q1070 240 1035 280L975 335M1070 245Q1100 290 1095 340T1055 400M900 45Q980 90 1070 135M840 150Q890 150 880 190M920 210Q1000 210 1030 150L1060 140M900 120Q950 80 945 110M1045 160q20 40 35 40M1190 200Q1210 225 1248 232M740 450L830 465M1140 345L1215 350M1085 360L1110 375M1130 400L1185 400M1160 430L1210 390M205 790L165 850L195 890M320 700Q345 720 345 755']].forEach(([w, d]) => {
  c.lineWidth = w; c.stroke(new Path2D(d));
});
c.lineWidth = 3;
for (let i = 0; i < 170; i++) {
  const x = 930 + rnd() * 280, y = 90 + rnd() * 460, l = 3 + rnd() * 13;
  c.beginPath(); c.moveTo(x, y); c.lineTo(x + l, y + (rnd() - .6) * 12); c.stroke();
}
for (let i = 0; i < 60; i++) {
  const x = 1040 + rnd() * 80, y = 120 + rnd() * 85;
  c.beginPath(); c.moveTo(x, y); c.lineTo(x + (rnd() - .5) * 8, y + 4 + rnd() * 16); c.stroke();
}
c.restore();
c.strokeStyle = '#3a463a'; c.lineWidth = 3; c.stroke(outline);

// Presence points.
document.getElementById('points').innerHTML = '937,76 828,131 918,139 928,147 993,167 802,206 1163,201 1162,276 1122,288 1219,316 1190,311 1230,291 1044,374 1065,375 995,418 607,498 1013,507 943,580 770,643 833,677 178,651 210,654 276,675 553,751 562,803 891,792 899,826 1019,764'
  .split(' ').map(s => s.split(',')).map(([x, y]) => `<circle cx="${460 + x / 3}" cy="${500 + y / 3}" r="5.500"/>`).join('');
```
